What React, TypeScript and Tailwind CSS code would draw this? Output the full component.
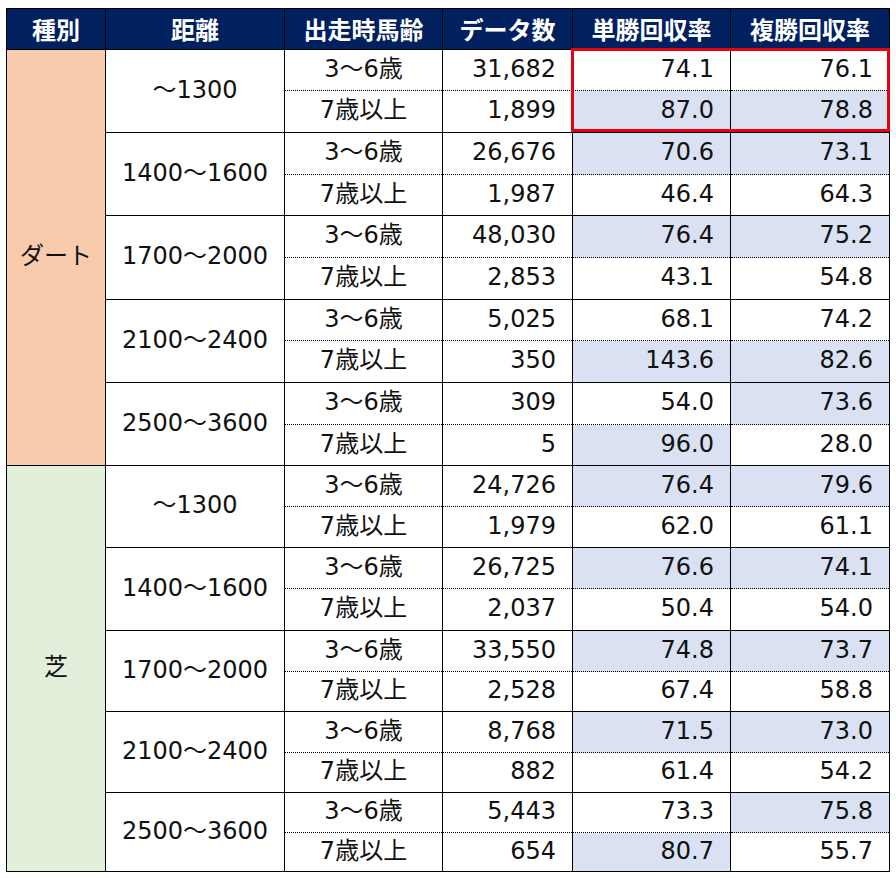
import React from 'react';

type Row = {
    age: string;
    count: string;
    win: string;
    place: string;
    winHi: boolean;
    placeHi: boolean;
};

type Group = {
    kind: string;
    kindBg: string;
    heights: number[];
    dists: { label: string; rows: [Row, Row] }[];
};

const r = (age: string, count: string, win: string, place: string, winHi = false, placeHi = false): Row => ({
    age, count, win, place, winHi, placeHi
});

const A = '3～6歳';
const B = '7歳以上';

const groups: Group[] = [
    {
        kind: 'ダート',
        kindBg: 'bg-[#f8cbad]',
        heights: [41, 42, 42, 41, 42, 42, 41, 42, 42, 41],
        dists: [
            { label: '～1300', rows: [r(A, '31,682', '74.1', '76.1'), r(B, '1,899', '87.0', '78.8', true, true)] },
            { label: '1400～1600', rows: [r(A, '26,676', '70.6', '73.1', true, true), r(B, '1,987', '46.4', '64.3')] },
            { label: '1700～2000', rows: [r(A, '48,030', '76.4', '75.2', true, true), r(B, '2,853', '43.1', '54.8')] },
            { label: '2100～2400', rows: [r(A, '5,025', '68.1', '74.2'), r(B, '350', '143.6', '82.6', true, true)] },
            { label: '2500～3600', rows: [r(A, '309', '54.0', '73.6', false, true), r(B, '5', '96.0', '28.0', true, false)] }
        ]
    },
    {
        kind: '芝',
        kindBg: 'bg-[#e2efda]',
        heights: [41, 41, 41, 42, 41, 40, 41, 40, 40, 39],
        dists: [
            { label: '～1300', rows: [r(A, '24,726', '76.4', '79.6', true, true), r(B, '1,979', '62.0', '61.1')] },
            { label: '1400～1600', rows: [r(A, '26,725', '76.6', '74.1', true, true), r(B, '2,037', '50.4', '54.0')] },
            { label: '1700～2000', rows: [r(A, '33,550', '74.8', '73.7', true, true), r(B, '2,528', '67.4', '58.8')] },
            { label: '2100～2400', rows: [r(A, '8,768', '71.5', '73.0', true, true), r(B, '882', '61.4', '54.2')] },
            { label: '2500～3600', rows: [r(A, '5,443', '73.3', '75.8', false, true), r(B, '654', '80.7', '55.7', true, false)] }
        ]
    }
];

const headers = ['種別', '距離', '出走時馬齢', 'データ数', '単勝回収率', '複勝回収率'];

const cell = 'border border-black p-0 leading-none';
const body = 'pb-[3px]';

export default function App() {
    return (
        <div className="w-[896px] h-[878px] bg-white pl-[6px] pt-[8px] font-['DejaVu_Sans','Noto_Sans_CJK_JP',sans-serif] text-[24px] text-[#111]">
            <div className="relative w-[883px]">
                <table className="w-[883px] table-fixed border-collapse">
                    <colgroup>
                        <col className="w-[99px]" />
                        <col className="w-[179px]" />
                        <col className="w-[158px]" />
                        <col className="w-[130px]" />
                        <col className="w-[158px]" />
                        <col className="w-[159px]" />
                    </colgroup>
                    <thead>
                        <tr className="h-[41px] bg-[#002060]">
                            {headers.map((h) => (
                                <th key={h} className={`${cell} text-center font-bold text-white font-['Noto_Sans_CJK_JP',sans-serif] text-[24px]`}>
                                    {h}
                                </th>
                            ))}
                        </tr>
                    </thead>
                    <tbody>
                        {groups.map((g) =>
                            g.dists.flatMap((d, di) =>
                                d.rows.map((row, ri) => {
                                    const idx = di * 2 + ri;
                                    const dotted = ri === 0 ? '[border-bottom-style:dotted]' : '[border-top-style:dotted]';
                                    return (
                                        <tr key={`${g.kind}-${idx}`} style={{ height: g.heights[idx] }}>
                                            {idx === 0 && (
                                                <td rowSpan={10} className={`${cell} ${body} ${g.kindBg} text-center`}>
                                                    {g.kind}
                                                </td>
                                            )}
                                            {ri === 0 && (
                                                <td rowSpan={2} className={`${cell} ${body} text-center`}>
                                                    {d.label}
                                                </td>
                                            )}
                                            <td className={`${cell} ${body} ${dotted} text-center`}>{row.age}</td>
                                            <td className={`${cell} ${body} ${dotted} text-right pr-[16px]`}>{row.count}</td>
                                            <td className={`${cell} ${body} ${dotted} text-right pr-[16px] ${row.winHi ? 'bg-[#d9e1f2]' : ''}`}>{row.win}</td>
                                            <td className={`${cell} ${body} ${dotted} text-right pr-[16px] ${row.placeHi ? 'bg-[#d9e1f2]' : ''}`}>{row.place}</td>
                                        </tr>
                                    );
                                })
                            )
                        )}
                    </tbody>
                </table>
                {/* red highlight frame */}
                <div className="absolute left-[565px] top-[40px] w-[319px] h-[84px] border-[3px] border-[#e50012] pointer-events-none" />
            </div>
        </div>
    );
}
